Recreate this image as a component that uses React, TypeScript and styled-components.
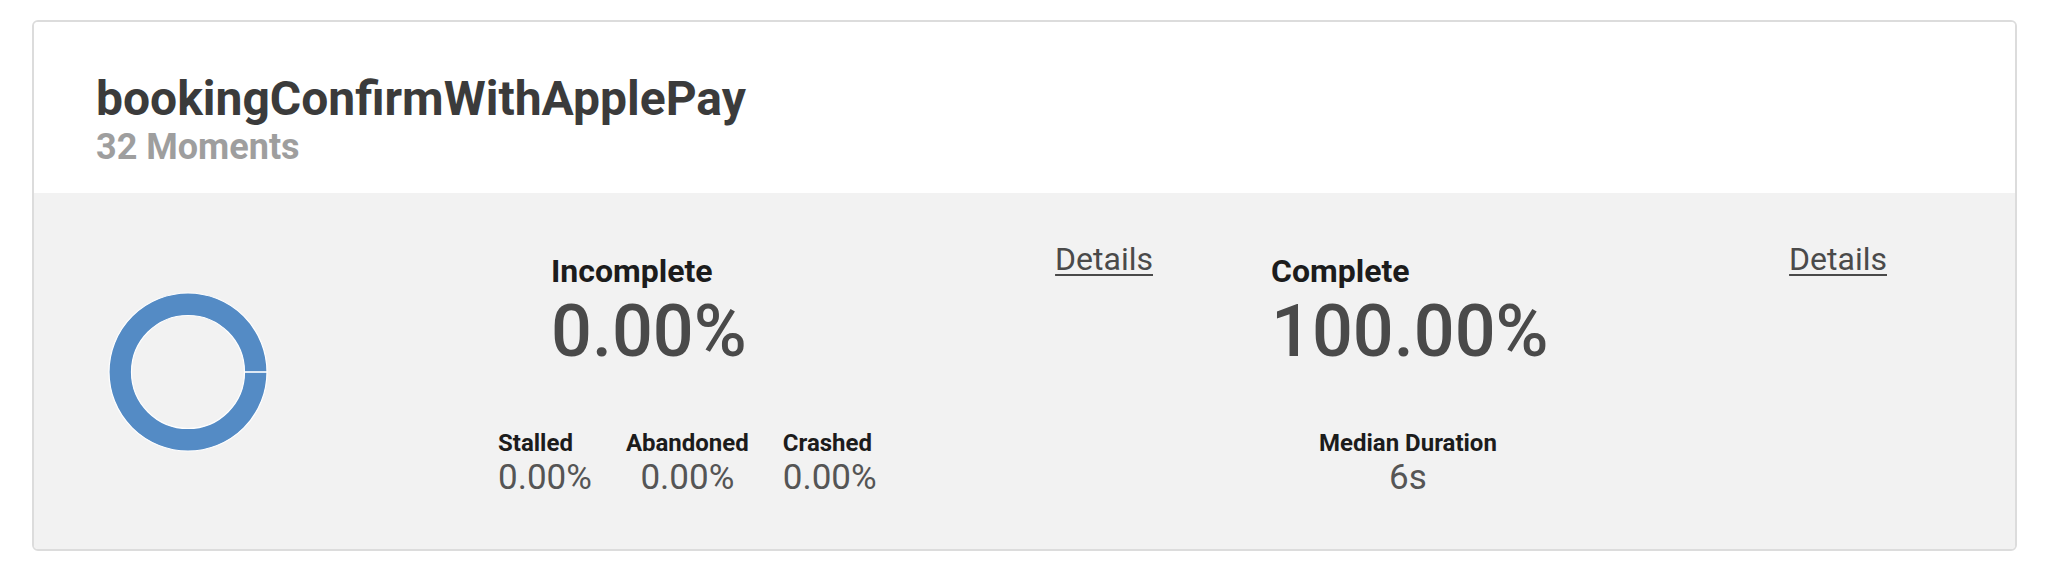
import React from "react";
import styled, { createGlobalStyle } from "styled-components";

const GlobalStyle = createGlobalStyle`
  html, body {
    margin: 0;
    padding: 0;
    background: #ffffff;
  }
  body {
    font-family: Roboto, "Liberation Sans", Arial, sans-serif;
    -webkit-font-smoothing: antialiased;
  }
`;

const Card = styled.section`
  margin: 20px 29px 0 32px;
  border: 2px solid #dcdcdc;
  border-radius: 6px;
  overflow: hidden;
  background: #ffffff;
`;

const Header = styled.header`
  padding: 49px 62px 27px;
  background: #ffffff;
`;

const Title = styled.h1`
  margin: 0;
  font-size: 48px;
  line-height: 56px;
  font-weight: 700;
  color: #3b3b3b;
`;

const Subtitle = styled.div`
  margin-top: 1px;
  font-size: 36px;
  line-height: 38px;
  font-weight: 700;
  color: #9e9e9e;
`;

const Body = styled.div`
  display: flex;
  align-items: flex-start;
  padding: 47px 0 51px 74px;
  background: #f2f2f2;
`;

const DonutWrap = styled.div`
  align-self: center;
  width: 160px;
  height: 160px;
  margin-top: 6px;
  flex: none;
`;

const Panel = styled.div<{ $width: number; $offset: number }>`
  display: flex;
  flex-direction: column;
  width: ${(p) => p.$width}px;
  margin-left: ${(p) => p.$offset}px;
  flex: none;
`;

const PanelTop = styled.div`
  display: flex;
  justify-content: space-between;
  align-items: flex-start;
`;

const Summary = styled.div<{ $indent: number }>`
  display: flex;
  flex-direction: column;
  padding-left: ${(p) => p.$indent}px;
  padding-top: 12px;
`;

const Heading = styled.div`
  font-size: 32px;
  line-height: 38px;
  font-weight: 700;
  color: #1c1c1c;
`;

const BigValue = styled.div`
  margin-top: 2px;
  font-size: 72px;
  line-height: 80px;
  font-weight: 500;
  color: #4a4a4a;
`;

const DetailsLink = styled.a`
  font-size: 32px;
  line-height: 38px;
  font-weight: 400;
  color: #4a4a4a;
  text-decoration: underline;
  text-decoration-thickness: 2px;
  text-underline-offset: 4px;
`;

const Stats = styled.div<{ $indent: number }>`
  display: flex;
  gap: 34px;
  margin-top: 57px;
  padding-left: ${(p) => p.$indent}px;
`;

const Stat = styled.div<{ $align: "left" | "center" }>`
  display: flex;
  flex-direction: column;
  align-items: ${(p) => (p.$align === "center" ? "center" : "flex-start")};
`;

const StatLabel = styled.div`
  font-size: 24px;
  line-height: 28px;
  font-weight: 700;
  color: #1c1c1c;
  white-space: nowrap;
`;

const StatValue = styled.div`
  margin-top: 1px;
  font-size: 35px;
  line-height: 40px;
  font-weight: 400;
  color: #555555;
  white-space: nowrap;
`;

const Donut: React.FC = () => {
  const c = 80;
  const outer = 79;
  const inner = 56.5;
  const mid = (outer + inner) / 2;
  return (
    <svg width="160" height="160" viewBox="0 0 160 160">
      <circle cx={c} cy={c} r={mid} fill="none" stroke="#548bc5" strokeWidth={outer - inner} />
      <circle cx={c} cy={c} r={outer} fill="none" stroke="#ffffff" strokeWidth={1.2} />
      <circle cx={c} cy={c} r={inner} fill="none" stroke="#ffffff" strokeWidth={1.2} />
      <line x1={c + inner} y1={c} x2={c + outer} y2={c} stroke="#ffffff" strokeWidth={1.6} />
    </svg>
  );
};

const App: React.FC = () => {
  return (
    <>
      <GlobalStyle />
      <Card>
        <Header>
          <Title>bookingConfirmWithApplePay</Title>
          <Subtitle>32 Moments</Subtitle>
        </Header>
        <Body>
          <DonutWrap>
            <Donut />
          </DonutWrap>
          <Panel $width={655} $offset={230}>
            <PanelTop>
              <Summary $indent={53}>
                <Heading>Incomplete</Heading>
                <BigValue>0.00%</BigValue>
              </Summary>
              <DetailsLink href="#">Details</DetailsLink>
            </PanelTop>
            <Stats $indent={0}>
              <Stat $align="left">
                <StatLabel>Stalled</StatLabel>
                <StatValue>0.00%</StatValue>
              </Stat>
              <Stat $align="center">
                <StatLabel>Abandoned</StatLabel>
                <StatValue>0.00%</StatValue>
              </Stat>
              <Stat $align="left">
                <StatLabel>Crashed</StatLabel>
                <StatValue>0.00%</StatValue>
              </Stat>
            </Stats>
          </Panel>
          <Panel $width={616} $offset={118}>
            <PanelTop>
              <Summary $indent={0}>
                <Heading>Complete</Heading>
                <BigValue>100.00%</BigValue>
              </Summary>
              <DetailsLink href="#">Details</DetailsLink>
            </PanelTop>
            <Stats $indent={48}>
              <Stat $align="center">
                <StatLabel>Median Duration</StatLabel>
                <StatValue>6s</StatValue>
              </Stat>
            </Stats>
          </Panel>
        </Body>
      </Card>
    </>
  );
};

export default App;
